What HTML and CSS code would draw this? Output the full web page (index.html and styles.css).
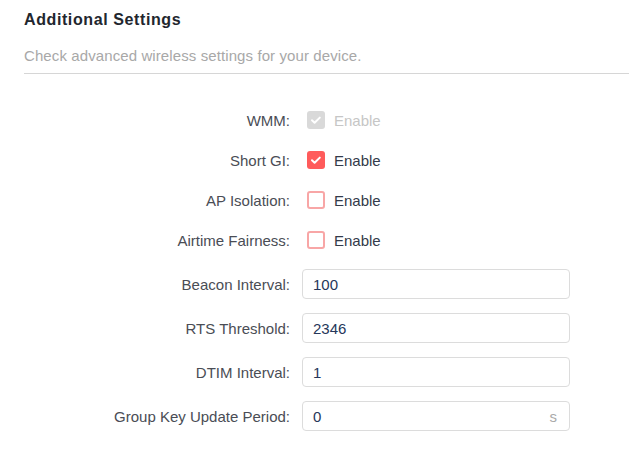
FILE: index.html
```html
<!DOCTYPE html>
<html>
<head>
<meta charset="utf-8">
<link rel="stylesheet" href="styles.css">
</head>
<body>
<div class="panel">
  <h2 class="title">Additional Settings</h2>
  <p class="subtitle">Check advanced wireless settings for your device.</p>
  <div class="form">
    <div class="row check-row">
      <label class="label">WMM:</label>
      <div class="control">
        <span class="box box-disabled"><svg viewBox="0 0 18 18" width="18" height="18"><path d="M5 9.2l2.6 2.5L12.8 6.6" fill="none" stroke="#fff" stroke-width="2" stroke-linecap="round" stroke-linejoin="round"/></svg></span>
        <span class="opt opt-disabled">Enable</span>
      </div>
    </div>
    <div class="row check-row">
      <label class="label">Short GI:</label>
      <div class="control">
        <span class="box box-on"><svg viewBox="0 0 18 18" width="18" height="18"><path d="M5 9.2l2.6 2.5L12.8 6.6" fill="none" stroke="#fff" stroke-width="2" stroke-linecap="round" stroke-linejoin="round"/></svg></span>
        <span class="opt">Enable</span>
      </div>
    </div>
    <div class="row check-row">
      <label class="label">AP Isolation:</label>
      <div class="control">
        <span class="box box-off"></span>
        <span class="opt">Enable</span>
      </div>
    </div>
    <div class="row check-row">
      <label class="label">Airtime Fairness:</label>
      <div class="control">
        <span class="box box-off"></span>
        <span class="opt">Enable</span>
      </div>
    </div>
    <div class="row input-row first-input">
      <label class="label">Beacon Interval:</label>
      <div class="field"><span class="value">100</span></div>
    </div>
    <div class="row input-row">
      <label class="label">RTS Threshold:</label>
      <div class="field"><span class="value">2346</span></div>
    </div>
    <div class="row input-row">
      <label class="label">DTIM Interval:</label>
      <div class="field"><span class="value">1</span></div>
    </div>
    <div class="row input-row">
      <label class="label">Group Key Update Period:</label>
      <div class="field"><span class="value">0</span><span class="unit">s</span></div>
    </div>
  </div>
</div>
</body>
</html>
```

FILE: styles.css
```css
html, body {
  margin: 0;
  padding: 0;
  background: #fff;
}
body {
  font-family: "Liberation Sans", Arial, sans-serif;
  color: #333;
}
.panel {
  padding: 0 0 0 24px;
}
.title {
  margin: 10px 0 0;
  font-size: 16px;
  letter-spacing: 0.6px;
  line-height: 20px;
  font-weight: bold;
  color: #22262e;
}
.subtitle {
  margin: 16px 0 0;
  font-size: 15px;
  line-height: 20px;
  letter-spacing: 0.1px;
  color: #a8a8a8;
  padding-bottom: 7px;
  border-bottom: 1px solid #d6d6d6;
}
.form {
  margin-top: 26px;
}
.row {
  display: flex;
  align-items: center;
}
.check-row {
  height: 40px;
}
.input-row {
  height: 44px;
}
.first-input {
  margin-top: 2px;
}
.label {
  flex: none;
  width: 278px;
  box-sizing: border-box;
  padding-right: 12px;
  text-align: right;
  font-size: 15px;
  color: #4a4d55;
}
.control {
  display: flex;
  align-items: center;
  margin-left: 5px;
}
.box {
  width: 18px;
  height: 18px;
  box-sizing: border-box;
  border-radius: 3px;
  display: flex;
  align-items: center;
  justify-content: center;
}
.box svg {
  display: block;
}
.box-disabled {
  background: #d9d9d9;
}
.box-on {
  background: #ff5b5b;
}
.box-off {
  border: 2px solid #f8a6a6;
  background: #fff;
}
.opt {
  margin-left: 9px;
  font-size: 15px;
  color: #333a4a;
}
.opt-disabled {
  color: #c6c6c6;
}
.field {
  width: 268px;
  height: 30px;
  box-sizing: border-box;
  border: 1px solid #dcdcdc;
  border-radius: 4px;
  display: flex;
  align-items: center;
  padding: 0 12px 0 10px;
}
.value {
  flex: 1;
  font-size: 15px;
  color: #26375a;
}
.unit {
  font-size: 15px;
  color: #aaa;
}
```
